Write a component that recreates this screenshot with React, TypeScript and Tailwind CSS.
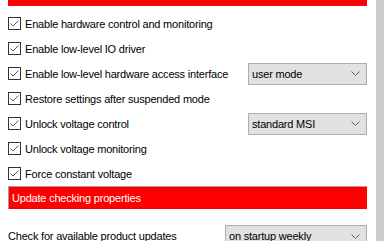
import React from 'react';

const Check: React.FC = () => (
  <span className="flex h-[13px] w-[13px] shrink-0 items-center justify-center border border-[#333333] bg-white">
    <svg width="11" height="11" viewBox="0 0 11 11" fill="none">
      <path d="M1.5 5.5L4 8L9.5 2.5" stroke="#5a5a5a" strokeWidth="1" />
    </svg>
  </span>
);

const Select: React.FC<{ value: string; className: string }> = ({ value, className }) => (
  <div className={`flex h-[22px] shrink-0 items-center justify-between border border-[#adadad] bg-[#e1e1e1] pl-[3px] pr-[6px] ${className}`}>
    <span>{value}</span>
    <svg width="9" height="5" viewBox="0 0 9 5" fill="none">
      <path d="M0.5 0.5L4.5 4.5L8.5 0.5" stroke="#606060" strokeWidth="1" />
    </svg>
  </div>
);

const Row: React.FC<{ label: string; select?: React.ReactNode }> = ({ label, select }) => (
  <div className="flex h-[25px] items-center">
    <div className="flex flex-1 items-center gap-[4px]">
      <Check />
      <span>{label}</span>
    </div>
    {select}
  </div>
);

export default function App() {
  return (
    <div
      className="flex h-[241px] w-[384px] overflow-hidden whitespace-nowrap bg-white text-[11px] leading-[14px] tracking-[-0.2px] text-black"
      style={{ fontFamily: '"Liberation Sans", Arial, sans-serif' }}
    >
      <div className="flex flex-1 flex-col pl-2 pr-[9px]">
        <div className="h-[6px] shrink-0 bg-[#ff0000]" />
        <div className="mt-[5px] flex flex-col">
          <Row label="Enable hardware control and monitoring" />
          <Row label="Enable low-level IO driver" />
          <Row label="Enable low-level hardware access interface" select={<Select value="user mode" className="w-[119px]" />} />
          <Row label="Restore settings after suspended mode" />
          <Row label="Unlock voltage control" select={<Select value="standard MSI" className="w-[119px]" />} />
          <Row label="Unlock voltage monitoring" />
          <Row label="Force constant voltage" />
        </div>
        <div className="flex h-[23px] shrink-0 items-center border-l border-t border-[#a0a0a0] bg-[#ff0000] pl-[3px] text-white">
          Update checking properties
        </div>
        <div className="mt-[16px] flex shrink-0 items-center">
          <span className="flex-1">Check for available product updates</span>
          <Select value="on startup weekly" className="w-[142px]" />
        </div>
      </div>
      <div className="w-2 shrink-0 bg-[#cdcdcd]" />
    </div>
  );
}
